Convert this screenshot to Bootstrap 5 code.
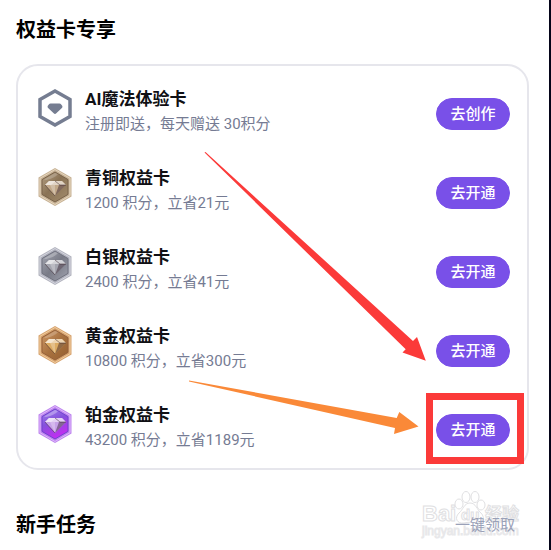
<!DOCTYPE html>
<html lang="zh-CN">
<head>
<meta charset="utf-8">
<meta name="viewport" content="width=device-width, initial-scale=1">
<title>权益卡专享</title>
<link href="https://cdn.jsdelivr.net/npm/bootstrap@5.3.0/dist/css/bootstrap.min.css" rel="stylesheet">
<style>
body{font-family:Roboto,"Noto Sans CJK SC",sans-serif;color:#101014;background:#fff}
.page{border-right:2px solid #050519;min-height:100vh;padding:16px 20px 0 16px;overflow:hidden}
.section-title{font-size:20px;line-height:28px;font-weight:700;color:#000;margin:0}
.benefits{border:2px solid #e6e6ec;border-radius:22px;margin:20px 0 41px;padding:21px 17px 15px 20px;gap:29px}
.tier-icon{width:34px;height:40px;margin-top:1px}
.tier-text{margin-left:13px}
.tier-name{font-size:17px;line-height:24px;font-weight:700;margin:0}
.tier-note{font-size:15px;line-height:26px;color:#757b93;margin:0}
.tier-action{padding-top:3px}
.btn-go{--bs-btn-color:#fff;--bs-btn-bg:#7950e8;--bs-btn-border-color:#7950e8;--bs-btn-hover-color:#fff;--bs-btn-hover-bg:#6840d8;font-size:15px;line-height:22px;font-weight:500;padding:4px 13px;min-width:74px}
.focus-box{border:7px solid #fb3a39;inset:-18px -14px -18px -10px;pointer-events:none}
.arrows{right:101px;top:86px;pointer-events:none}
.claim{font-size:15px;line-height:28px;color:#9aa1b8;margin-right:14px;z-index:1}
.watermark{right:2px;top:-22px;pointer-events:none}
</style>
</head>
<body>
<svg width="0" height="0" class="position-absolute" aria-hidden="true">
<defs>
<linearGradient id="bronze" x2="1" y2="1"><stop stop-color="#b5a084"/><stop offset=".45" stop-color="#8a7355"/><stop offset="1" stop-color="#a28b6c"/></linearGradient>
<linearGradient id="silver" x2="1" y2="1"><stop stop-color="#a5a7b2"/><stop offset=".5" stop-color="#797b87"/><stop offset="1" stop-color="#a0a2ae"/></linearGradient>
<linearGradient id="gold" x2="1" y2="1"><stop stop-color="#cf9a68"/><stop offset=".5" stop-color="#a8713f"/><stop offset="1" stop-color="#96602f"/></linearGradient>
<linearGradient id="platinum" x2=".4" y2="1"><stop stop-color="#a184ee"/><stop offset=".5" stop-color="#8551dc"/><stop offset="1" stop-color="#c02ef0"/></linearGradient>
<g id="gem">
<path d="M11 14h13l4 4-11 11L7 18z" fill="currentColor"/>
<path d="M11 14h13l4 4H7z" fill="#fff" opacity=".5"/>
<path d="M11 14h7l-5 4H7z" fill="#fff" opacity=".4"/>
<path d="M12 18h5v11z" fill="#fff" opacity=".25"/>
<path d="M21 18h7L17 29z" fill="#200b18" opacity=".4"/>
<path d="M17 14l5 4h6M7 18l10 11" fill="none" stroke="#29151c" stroke-opacity=".45"/>
</g>
</defs>
</svg>
<main class="page">
<h1 class="section-title">权益卡专享</h1>
<section class="benefits position-relative d-flex flex-column">
<article class="d-flex align-items-start">
<svg class="tier-icon flex-shrink-0" viewBox="0 0 34 40" aria-hidden="true"><path d="M17 3l15 8.500v17L17 37 2 28.500v-17z" fill="none" stroke="#757d91" stroke-width="3.500"/><path d="M12.500 15.500h9q1 0 1.700.9l1 1.400q.8 1.200-.3 2.200l-5.600 5.300q-1.300 1.200-2.600 0L10.100 20q-1.100-1-.3-2.200l1-1.400q.7-.9 1.700-.9z" fill="#757d91"/></svg>
<div class="tier-text flex-grow-1"><h2 class="tier-name">AI魔法体验卡</h2><p class="tier-note">注册即送，每天赠送 30积分</p></div>
<div class="tier-action align-self-center"><button type="button" class="btn btn-go rounded-pill d-block">去创作</button></div>
</article>
<article class="d-flex align-items-start">
<svg class="tier-icon flex-shrink-0" viewBox="0 0 34 40" color="#c2a98a" aria-hidden="true"><path d="M17 1l16.500 9.500v19L17 39 .5 29.500v-19z" fill="#c7b295"/><path d="M17 2.500l15 8.800v17.400l-15 8.800-15-8.800V11.300z" fill="none" stroke="#e6d6be"/><path d="M17 5l13 7.600v14.800L17 35 4 27.400V12.600z" fill="url(#bronze)" stroke="#79634a"/><path d="M8 13q9-2 12-6l-3-1-11 6.500z" fill="#fff" opacity=".2"/><use href="#gem"/></svg>
<div class="tier-text flex-grow-1"><h2 class="tier-name">青铜权益卡</h2><p class="tier-note">1200 积分，立省21元</p></div>
<div class="tier-action align-self-center"><button type="button" class="btn btn-go rounded-pill d-block">去开通</button></div>
</article>
<article class="d-flex align-items-start">
<svg class="tier-icon flex-shrink-0" viewBox="0 0 34 40" color="#a4a5af" aria-hidden="true"><path d="M17 1l16.500 9.500v19L17 39 .5 29.500v-19z" fill="#b2b3be"/><path d="M17 2.500l15 8.800v17.400l-15 8.800-15-8.800V11.300z" fill="none" stroke="#d5d6df"/><path d="M17 5l13 7.600v14.800L17 35 4 27.400V12.600z" fill="url(#silver)" stroke="#717380"/><path d="M8 13q9-2 12-6l-3-1-11 6.500z" fill="#fff" opacity=".25"/><use href="#gem"/></svg>
<div class="tier-text flex-grow-1"><h2 class="tier-name">白银权益卡</h2><p class="tier-note">2400 积分，立省41元</p></div>
<div class="tier-action align-self-center"><button type="button" class="btn btn-go rounded-pill d-block">去开通</button></div>
</article>
<article class="d-flex align-items-start">
<svg class="tier-icon flex-shrink-0" viewBox="0 0 34 40" color="#dcab63" aria-hidden="true"><path d="M17 1l16.500 9.500v19L17 39 .5 29.500v-19z" fill="#d7a36e"/><path d="M17 2.500l15 8.800v17.400l-15 8.800-15-8.800V11.300z" fill="none" stroke="#f1cd9f"/><path d="M17 5l13 7.600v14.800L17 35 4 27.400V12.600z" fill="url(#gold)" stroke="#95613b"/><path d="M8 13q9-2 12-6l-3-1-11 6.500z" fill="#fff" opacity=".2"/><use href="#gem"/></svg>
<div class="tier-text flex-grow-1"><h2 class="tier-name">黄金权益卡</h2><p class="tier-note">10800 积分，立省300元</p></div>
<div class="tier-action align-self-center"><button type="button" class="btn btn-go rounded-pill d-block">去开通</button></div>
</article>
<article class="d-flex align-items-start">
<svg class="tier-icon flex-shrink-0" viewBox="0 0 34 40" color="#c7a2e8" aria-hidden="true"><path d="M17 1l16.500 9.500v19L17 39 .5 29.500v-19z" fill="#bd86ed"/><path d="M17 2.500l15 8.800v17.400l-15 8.800-15-8.800V11.300z" fill="none" stroke="#e1b5ff"/><path d="M17 5l13 7.600v14.800L17 35 4 27.400V12.600z" fill="url(#platinum)" stroke="#7143cf"/><path d="M8 13q9-2 12-6l-3-1-11 6.500z" fill="#fff" opacity=".3"/><use href="#gem"/></svg>
<div class="tier-text flex-grow-1"><h2 class="tier-name">铂金权益卡</h2><p class="tier-note">43200 积分，立省1189元</p></div>
<div class="tier-action align-self-center position-relative"><button type="button" class="btn btn-go rounded-pill d-block">去开通</button><span class="focus-box position-absolute"></span></div>
</article>
<svg class="arrows position-absolute" width="238" height="283" viewBox="188 152 238 283" aria-hidden="true"><path d="M204.500 152.500L205.500 152 413 341l4-4 8.800 23.800-23.300-8.300 3.200-3.200z" fill="#fb3a39"/><path d="M189 380.500L396.700 418l2.600-6 19.200 14.500L394 434l1-6L189 381.500z" fill="#fa8938"/></svg>
</section>
<div class="position-relative d-flex justify-content-between align-items-center">
<h2 class="section-title">新手任务</h2>
<a href="#" class="claim text-decoration-none position-relative">一键领取</a>
<svg class="watermark position-absolute" width="108" height="56" viewBox="420 488 108 56" font-family="'Liberation Sans','Noto Sans CJK SC',sans-serif" fill="#fff" stroke="#e0e0e2" aria-hidden="true">
<g font-weight="700"><text x="423" y="520" font-size="22">Bai</text><text x="486" y="519" font-size="17">经验</text></g>
<ellipse cx="460" cy="503" rx="4" ry="5"/><ellipse cx="467" cy="496" rx="4" ry="5.500"/><ellipse cx="476" cy="496" rx="4" ry="5.500"/><ellipse cx="482" cy="504" rx="4" ry="5"/><path d="M471 502c6 0 7 7 11 10 5 5 1 11-5 10-4-1-8-1-12 0-7 1-10-5-5-10 4-3 5-10 11-10z"/>
<text x="462" y="519" font-size="15" font-weight="700">du</text>
<text x="423" y="534" font-size="12" stroke="#e8e8ea">jingyan.baidu.com</text>
</svg>
</div>
</main>
<script src="https://cdn.jsdelivr.net/npm/bootstrap@5.3.0/dist/js/bootstrap.bundle.min.js"></script>
</body>
</html>
